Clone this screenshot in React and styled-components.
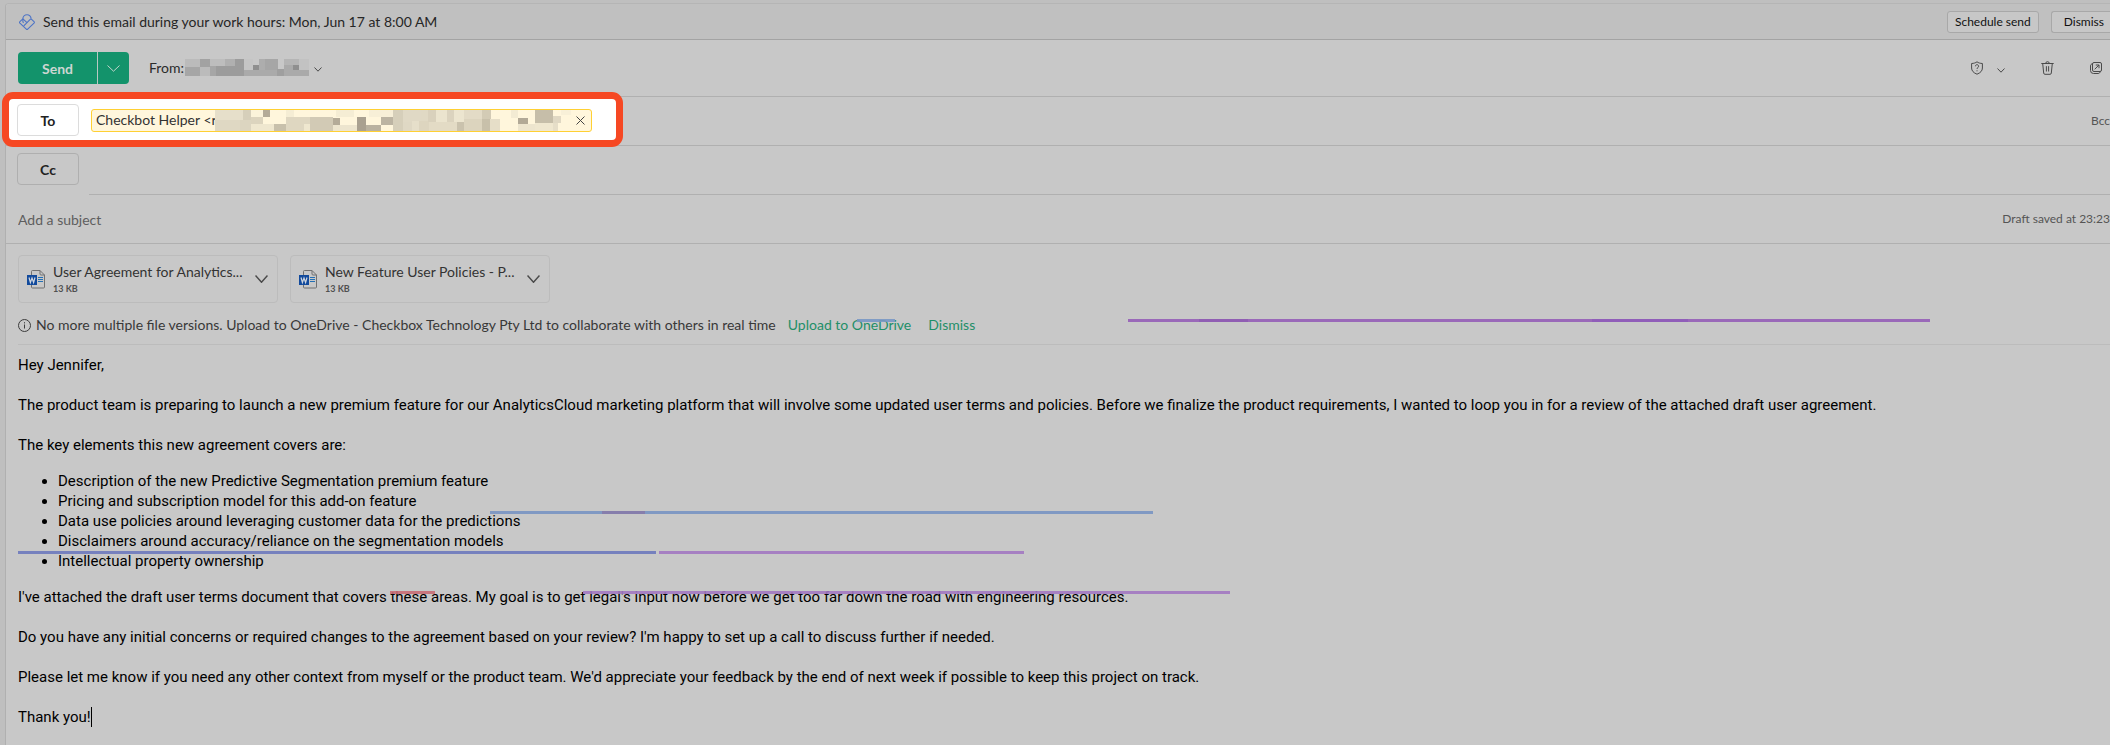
import React, { useState } from 'react';
import styled, { createGlobalStyle } from 'styled-components';

const GlobalStyle = createGlobalStyle`
  * {
    box-sizing: border-box;
  }
  body {
    margin: 0;
    background: #bfbfbf;
    font-family: Lato, 'Open Sans', sans-serif;
    font-size: 14px;
    line-height: 20px;
    color: #262626;
    overflow-x: hidden;
  }
  button,
  input {
    font-family: inherit;
  }
`;

const Page = styled.div`
  min-height: 100vh;
  padding: 3px 0 0 5px;
  display: flex;
`;

const Panel = styled.main`
  position: relative;
  flex: 1;
  min-width: 0;
  background: #c8c8c8;
  border-top: 1px solid #b5b5b5;
  border-left: 1px solid #b0b0b0;
  border-top-left-radius: 4px;
`;

const Banner = styled.div`
  display: flex;
  align-items: center;
  gap: 12px;
  height: 36px;
  padding-left: 13px;
  background: #c0c0c0;
  border-bottom: 1px solid #a3a3a3;
  border-top-left-radius: 4px;
`;

const BannerText = styled.span`
  flex: 1;
  display: flex;
  align-items: center;
  gap: 8px;
`;

const SmallButton = styled.button`
  height: 22px;
  padding: 0 ${(p) => (p.$flush ? '6px' : '7px')} 0 ${(p) => (p.$flush ? '12px' : '7px')};
  border: 1px solid #a8a8a8;
  border-right-width: ${(p) => (p.$flush ? '0' : '1px')};
  border-radius: ${(p) => (p.$flush ? '3px 0 0 3px' : '3px')};
  background: #c7c7c7;
  color: #111;
  font-size: 12px;
  line-height: 18px;
`;

const Row = styled.div`
  position: relative;
  display: flex;
  align-items: center;
  height: ${(p) => (p.$tall ? '57px' : '49px')};
  padding: 0 0 ${(p) => (p.$lifted ? '2px' : '0')} ${(p) => (p.$lifted ? '11px' : '12px')};
  border-bottom: 1px solid #b0b0b0;
`;

const SendGroup = styled.div`
  display: flex;
  gap: 1px;
  height: 32px;
  border-radius: 4px;
  overflow: hidden;
  background: #b9c8c2;
`;

const SendButton = styled.button`
  width: ${(p) => (p.$narrow ? '31px' : '79px')};
  padding: 0;
  border: 0;
  background: #13936b;
  color: #cdd6d2;
  font-size: 14px;
  font-weight: 700;
  display: flex;
  align-items: center;
  justify-content: center;
`;

const FromButton = styled.button`
  display: flex;
  align-items: center;
  gap: 1px;
  margin-left: 20px;
  padding: 0 0 2px;
  border: 0;
  background: none;
  color: #2b2b2b;
  font-size: 14px;

  > svg:last-child {
    margin: 5px 0 0 4px;
  }
`;

const Tools = styled.div`
  display: flex;
  align-items: center;
  margin-left: auto;
  padding-right: 8px;
  gap: 36px;
`;

const ToolButton = styled.button`
  display: flex;
  align-items: center;
  gap: 14px;
  padding: 0;
  border: 0;
  background: none;
  color: #4a4a4a;

  > svg + svg {
    margin-top: 4px;
  }
`;

// ring drawn over the row borders around the recipient
const Callout = styled.div`
  position: absolute;
  top: -5px;
  left: -4px;
  width: 621px;
  height: 55px;
  border: 7px solid #f64823;
  border-radius: 11px;
  background: #fff;
`;

const FieldButton = styled.button`
  position: relative;
  width: 62px;
  height: 32px;
  border: 1px solid ${(p) => (p.$lit ? '#dcdcdc' : '#afafaf')};
  border-radius: 4px;
  background: ${(p) => (p.$lit ? '#fff' : 'transparent')};
  color: #222;
  font-size: 14px;
  font-weight: 700;
`;

const Chip = styled.div`
  position: relative;
  display: flex;
  align-items: center;
  width: 501px;
  height: 23px;
  margin-left: 12px;
  padding: 0 6px 0 4px;
  border: 1px solid #ffd033;
  border-radius: 3px;
  background: #fff6dc;
`;

const ChipName = styled.span`
  width: 119px;
  white-space: nowrap;
  color: #333;
`;

const ChipClose = styled.button`
  display: flex;
  margin-left: auto;
  padding: 0;
  border: 0;
  background: none;
  color: #444;
`;

const BccButton = styled.button`
  margin-left: auto;
  padding: 0;
  border: 0;
  background: none;
  color: #555;
  font-size: 12px;
`;

const CcRow = styled.div`
  display: flex;
  align-items: center;
  gap: 10px;
  height: 49px;
  padding-left: 11px;

  > button {
    margin-bottom: 3px;
  }
`;

const CcInput = styled.input`
  flex: 1;
  align-self: stretch;
  border: 0;
  border-bottom: 1px solid #b0b0b0;
  outline: 0;
  background: none;
  font-size: 14px;
`;

const SubjectInput = styled.input`
  flex: 1;
  padding: 0;
  border: 0;
  outline: 0;
  background: none;
  color: #222;
  font-size: 14px;

  &::placeholder {
    color: #5e5e5e;
    opacity: 1;
  }
`;

const DraftNote = styled.span`
  color: #555;
  font-size: 12px;
`;

const Attachments = styled.div`
  display: flex;
  gap: 12px;
  padding: 11px 12px 0;
`;

const Attachment = styled.button`
  display: flex;
  align-items: center;
  gap: 8px;
  width: 260px;
  height: 48px;
  padding: 0 9px 0 8px;
  border: 1px solid #bcbcbc;
  border-radius: 4px;
  background: none;
  color: #333;
  text-align: left;
`;

const FileText = styled.span`
  flex: 1;
  display: flex;
  flex-direction: column;
`;

const FileName = styled.span`
  font-size: 14px;
  line-height: 20px;
  white-space: nowrap;
`;

const FileSize = styled.span`
  font-size: 9px;
  font-weight: 700;
  line-height: 14px;
  color: #505050;
`;

const InfoBar = styled.div`
  display: flex;
  align-items: center;
  height: 42px;
  margin-left: 12px;
  padding-top: 3px;
  border-bottom: 1px solid #bcbcbc;
  color: #383838;

  > svg {
    margin-right: 5px;
  }
`;

const InfoLink = styled.a`
  margin-left: ${(p) => (p.$wide ? '17px' : '12px')};
  color: #1f8f68;
  text-decoration: none;
`;

const Message = styled.section`
  padding: 10px 12px 18px;
  color: #000;
  font-family: Roboto, 'Liberation Sans', sans-serif;
  font-size: 15px;
  line-height: 20px;

  p {
    margin: 0;
  }
  p + p {
    margin-top: 20px;
  }
  ul {
    margin: 16px 0;
    padding-left: 40px;
  }
`;

const Caret = styled.span`
  display: inline-block;
  width: 1px;
  height: 20px;
  background: #000;
  vertical-align: top;
`;

// proofing marks float over the message
const Mark = styled.span`
  position: absolute;
  top: ${(p) => p.$top}px;
  left: ${(p) => p.$left}px;
  width: ${(p) => p.$width}px;
  height: 3px;
  background: ${(p) => p.$color};
  opacity: 0.9;
  pointer-events: none;
`;

const marks = [
  [315, 851, 38, '#7897c4'],
  [315, 1122, 802, '#955eb7'],
  [315, 1193, 49, '#8f5db2'],
  [315, 1586, 96, '#8f5db9'],
  [507, 484, 663, '#7894c2'],
  [507, 596, 43, '#867baa'],
  [547, 12, 638, '#6d79bc'],
  [547, 653, 365, '#a278c1'],
  [587, 384, 45, '#c86b74'],
  [587, 577, 647, '#a278c1'],
];

// x, y, width, height, fill
const senderBlocks = [
  [0, 0, 15, 8, '#bbbbbb'], [15, 0, 10, 8, '#a2a2a2'], [25, 0, 15, 7, '#bdbdbd'],
  [40, 0, 10, 7, '#b0b0b0'], [50, 0, 9, 17, '#9c9c9c'], [0, 8, 15, 9, '#a6a6a6'],
  [15, 8, 10, 9, '#bbbbbb'], [25, 7, 6, 10, '#a6a6a6'], [31, 7, 19, 10, '#9c9c9c'],
  [59, 0, 9, 11, '#c5c5c5'], [59, 11, 65, 6, '#aaaaaa'], [68, 6, 6, 5, '#8f8f8f'],
  [74, 0, 6, 11, '#adadad'], [80, 0, 13, 11, '#a6a6a6'], [92, 10, 7, 7, '#9f9f9f'],
  [99, 0, 15, 6, '#b5b5b5'], [99, 6, 9, 5, '#aaaaaa'], [108, 6, 6, 5, '#8f8f8f'],
  [114, 0, 10, 11, '#c2c2c2'],
];

const recipientBlocks = [
  [0, 0, 28, 10, '#e6dfca'], [0, 10, 25, 11, '#dfd8c3'], [25, 10, 11, 11, '#dcd5c0'],
  [28, 0, 8, 10, '#d6cfba'], [36, 0, 12, 7, '#fbf3da'], [36, 7, 12, 7, '#dcd4be'],
  [36, 14, 23, 7, '#efe7cf'], [48, 0, 7, 7, '#b4ab98'], [59, 14, 12, 7, '#c8c0ab'],
  [71, 0, 8, 7, '#f5edd4'], [71, 7, 24, 7, '#dfd7c1'], [71, 14, 18, 7, '#dfd7c1'],
  [89, 14, 6, 7, '#efe7cf'], [95, 7, 23, 14, '#d2cab5'], [118, 8, 7, 7, '#b4ab98'],
  [118, 15, 24, 6, '#ede5ce'], [121, 0, 18, 7, '#f5edd4'], [142, 7, 9, 14, '#aaa190'],
  [151, 15, 15, 6, '#bab2a0'], [154, 0, 24, 7, '#f7efd7'], [166, 7, 12, 8, '#bcb4a2'],
  [178, 0, 10, 21, '#d6cfba'], [188, 0, 18, 12, '#e0d9c5'], [188, 12, 9, 9, '#dfd8c4'],
  [197, 11, 7, 10, '#e6dfca'], [204, 11, 10, 10, '#ddd5bf'], [206, 0, 7, 11, '#e0d9c4'],
  [213, 0, 8, 12, '#d9d1bc'], [221, 0, 11, 12, '#ebe4ce'], [214, 12, 28, 9, '#e3dbc5'],
  [232, 0, 7, 12, '#dbd3be'], [239, 0, 10, 12, '#ece5cf'], [249, 0, 18, 9, '#e3dbc6'],
  [242, 12, 7, 9, '#cac2ad'], [249, 9, 18, 12, '#dcd4be'], [267, 0, 9, 9, '#d3cbb5'],
  [267, 9, 8, 12, '#c8c0aa'], [275, 9, 10, 12, '#e6dec8'], [296, 0, 7, 8, '#f3ebd3'],
  [303, 8, 10, 6, '#b2a996'], [303, 14, 17, 7, '#ede5ce'], [320, 0, 18, 13, '#c6bea9'],
  [320, 13, 18, 8, '#efe7cf'], [338, 6, 8, 7, '#e0d8c3'], [338, 13, 5, 8, '#e6dec8'],
  [346, 0, 10, 5, '#f8f0d8'],
];

const Redacted = ({ blocks, width, height }) => (
  <svg width={width} height={height} shapeRendering="crispEdges" aria-hidden="true">
    {blocks.map(([x, y, w, h, fill], index) => (
      <rect key={index} x={x} y={y} width={w} height={h} fill={fill} />
    ))}
  </svg>
);

const Chevron = ({ width = 8, height = 5, color = '#4a4a4a', stroke = 1 }) => (
  <svg width={width} height={height} viewBox={`0 0 ${width} ${height}`} fill="none" stroke={color} strokeWidth={stroke}>
    <path d={`M.5 .5L${width / 2} ${height - 0.8}L${width - 0.5} .5`} />
  </svg>
);

const InsightsIcon = () => (
  <svg width="16" height="16" viewBox="0 0 16 16" fill="none" stroke="#4c73c6" strokeWidth="1.1">
    <path d="M3.9 4.8L.9 7.7a1 1 0 0 0 0 1.4L7.3 15.2a1 1 0 0 0 1.4 0L15 9.1a1 1 0 0 0 0-1.4L12.6 5.3a1 1 0 0 0-1.4 0L4.8 11.8" />
    <path d="M4.6 8.9a2 2 0 0 1-.7-1.5V4.8a4.1 4.1 0 0 1 8.2 0" />
    <path d="M3.9 4.8L8 8.6" />
  </svg>
);

const ShieldIcon = () => (
  <svg width="12" height="14" viewBox="0 0 12 14" fill="none" stroke="currentColor">
    <path d="M6 .8C4.6 1.9 2.8 2.4.6 2.5V7c0 2.8 1.900 4.8 5.400 6.200C9.500 11.800 11.400 9.800 11.400 7V2.500C9.200 2.400 7.400 1.900 6 .8z" />
    <path d="M4.400 5.300a1.600 1.600 0 1 1 2.500 1.300c-.6.4-.9.700-.9 1.400M6 9.300v1" />
  </svg>
);

const TrashIcon = () => (
  <svg width="13" height="14" viewBox="0 0 13 14" fill="none" stroke="currentColor">
    <path d="M.3 2.500h12.400M4.700 2.500a1.800 1.800 0 0 1 3.600 0M1.700 2.500l1 9.600a1.300 1.300 0 0 0 1.300 1.200h5a1.300 1.300 0 0 0 1.300-1.200l1-9.600M5.400 5.200v5.300M7.600 5.200v5.300" />
  </svg>
);

const PopOutIcon = () => (
  <svg width="12" height="12" viewBox="0 0 12 12" fill="none" stroke="currentColor">
    <rect x="2.500" y=".5" width="9" height="9" rx="1.500" />
    <path d="M2.500 1.800C1.200 2 .5 2.700.5 4v4.500a3 3 0 0 0 3 3H8c1.200 0 2-.6 2.200-2M4.700 7.300l4.300-4.300M5.800 3H9v3.200" />
  </svg>
);

const CloseIcon = () => (
  <svg width="9" height="9" viewBox="0 0 9 9" stroke="currentColor">
    <path d="M.5.5l8 8M8.500.5l-8 8" />
  </svg>
);

const InfoIcon = () => (
  <svg width="13" height="13" viewBox="0 0 13 13" fill="none" stroke="#3c3c3c">
    <circle cx="6.500" cy="6.500" r="6" />
    <path d="M6.500 5.500v4M6.500 3.200v1.200" />
  </svg>
);

const WordIcon = () => (
  <svg width="18" height="19" viewBox="0 0 18 19" fill="none">
    <path d="M4.500 5V1.500a1 1 0 0 1 1-1H13L17.500 5v12a1 1 0 0 1-1 1h-11a1 1 0 0 1-1-1V15" stroke="#717171" />
    <path d="M13 .5V4a1 1 0 0 0 1 1h3.500" stroke="#717171" />
    <path d="M11 7.500h5M11 9.500h5M11 11.500h5" stroke="#2470b5" />
    <rect y="5" width="10" height="10" fill="#124a9c" />
    <path d="M2 7.500l1.400 5L5 8l1.600 4.500L8 7.500" stroke="#d0d6df" strokeWidth="1.200" />
  </svg>
);

const files = ['User Agreement for Analytics...', 'New Feature User Policies - P...'];

const points = [
  'Description of the new Predictive Segmentation premium feature',
  'Pricing and subscription model for this add-on feature',
  'Data use policies around leveraging customer data for the predictions',
  'Disclaimers around accuracy/reliance on the segmentation models',
  'Intellectual property ownership',
];

const App = () => {
  const [cc, setCc] = useState('');
  const [subject, setSubject] = useState('');

  return (
    <>
      <GlobalStyle />
      <Page>
        <Panel>
          <Banner>
            <BannerText>
              <InsightsIcon />
              Send this email during your work hours: Mon, Jun 17 at 8:00 AM
            </BannerText>
            <SmallButton type="button">Schedule send</SmallButton>
            <SmallButton type="button" $flush>
              Dismiss
            </SmallButton>
          </Banner>

          <Row $tall>
            <SendGroup>
              <SendButton type="button">Send</SendButton>
              <SendButton type="button" $narrow aria-label="More send options">
                <Chevron width={13} height={7} color="#c0d3cb" />
              </SendButton>
            </SendGroup>
            <FromButton type="button">
              From:
              <Redacted blocks={senderBlocks} width={124} height={17} />
              <Chevron />
            </FromButton>
            <Tools>
              <ToolButton type="button" aria-label="Sensitivity">
                <ShieldIcon />
                <Chevron />
              </ToolButton>
              <ToolButton type="button" aria-label="Discard">
                <TrashIcon />
              </ToolButton>
              <ToolButton type="button" aria-label="Open in new window">
                <PopOutIcon />
              </ToolButton>
            </Tools>
          </Row>

          <Row $lifted>
            <Callout />
            <FieldButton type="button" $lit>
              To
            </FieldButton>
            <Chip>
              <ChipName>Checkbot Helper &lt;r</ChipName>
              <Redacted blocks={recipientBlocks} width={356} height={21} />
              <ChipClose type="button" aria-label="Remove recipient">
                <CloseIcon />
              </ChipClose>
            </Chip>
            <BccButton type="button">Bcc</BccButton>
          </Row>

          <CcRow>
            <FieldButton type="button">Cc</FieldButton>
            <CcInput aria-label="Cc" value={cc} onChange={(e) => setCc(e.target.value)} />
          </CcRow>

          <Row>
            <SubjectInput
              aria-label="Subject"
              placeholder="Add a subject"
              value={subject}
              onChange={(e) => setSubject(e.target.value)}
            />
            <DraftNote>Draft saved at 23:23</DraftNote>
          </Row>

          <Attachments>
            {files.map((name) => (
              <Attachment type="button" key={name}>
                <WordIcon />
                <FileText>
                  <FileName>{name}</FileName>
                  <FileSize>13 KB</FileSize>
                </FileText>
                <Chevron width={13} height={8} stroke={1.5} />
              </Attachment>
            ))}
          </Attachments>

          <InfoBar>
            <InfoIcon />
            No more multiple file versions. Upload to OneDrive - Checkbox Technology Pty Ltd to
            collaborate with others in real time
            <InfoLink href="#upload">Upload to OneDrive</InfoLink>
            <InfoLink href="#dismiss" $wide>
              Dismiss
            </InfoLink>
          </InfoBar>

          <Message>
            <p>Hey Jennifer,</p>
            <p>
              The product team is preparing to launch a new premium feature for our AnalyticsCloud
              marketing platform that will involve some updated user terms and policies. Before we
              finalize the product requirements, I wanted to loop you in for a review of the
              attached draft user agreement.
            </p>
            <p>The key elements this new agreement covers are:</p>
            <ul>
              {points.map((point) => (
                <li key={point}>{point}</li>
              ))}
            </ul>
            <p>
              I've attached the draft user terms document that covers these areas. My goal is to get
              legal's input now before we get too far down the road with engineering resources.
            </p>
            <p>
              Do you have any initial concerns or required changes to the agreement based on your
              review? I'm happy to set up a call to discuss further if needed.
            </p>
            <p>
              Please let me know if you need any other context from myself or the product team. We'd
              appreciate your feedback by the end of next week if possible to keep this project on
              track.
            </p>
            <p>
              Thank you!
              <Caret />
            </p>
          </Message>

          {marks.map(([top, left, width, color]) => (
            <Mark key={`${top}-${left}`} $top={top} $left={left} $width={width} $color={color} />
          ))}
        </Panel>
      </Page>
    </>
  );
};

export default App;
